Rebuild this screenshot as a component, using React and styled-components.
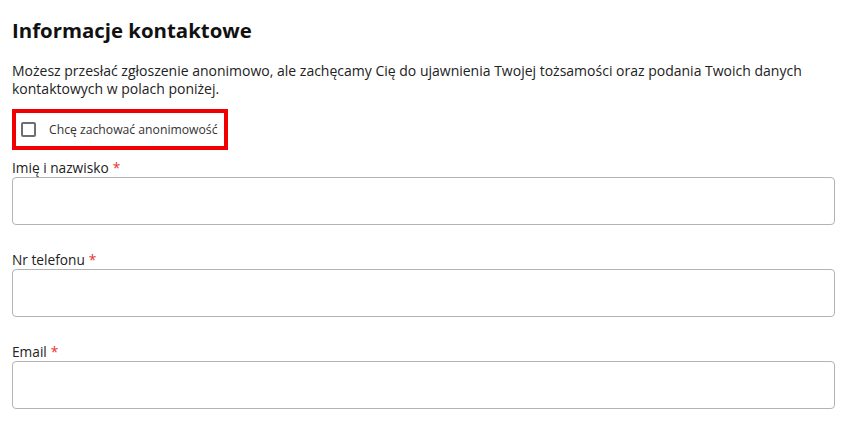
import React from "react";
import styled, { createGlobalStyle } from "styled-components";

const GlobalStyle = createGlobalStyle`
  body {
    margin: 0;
    background: #fff;
    font-family: "Open Sans", "Noto Sans", sans-serif;
    color: #1a1a1a;
  }
`;

const Section = styled.section`
  padding: 17px 15px 0 12px;
  display: flex;
  flex-direction: column;
`;

const Heading = styled.h2`
  margin: 0;
  font-size: 20.4px;
  font-weight: 700;
  line-height: 27px;
  color: #111;
`;

const Intro = styled.p`
  margin: 18px 0 0;
  font-size: 14px;
  line-height: 18px;
  color: #222;
`;

const AnonBox = styled.label`
  align-self: flex-start;
  display: flex;
  align-items: center;
  gap: 13px;
  margin-top: 11px;
  width: 216px;
  height: 41px;
  box-sizing: border-box;
  padding-left: 5px;
  border: 4px solid #f00000;
  font-size: 12.2px;
  white-space: nowrap;
  color: #333;
  cursor: pointer;
`;

const Check = styled.span`
  width: 15px;
  height: 15px;
  box-sizing: border-box;
  border: 2px solid #6e6e6e;
  border-radius: 2px;
  flex-shrink: 0;
`;

const Field = styled.div`
  display: flex;
  flex-direction: column;
  margin-top: ${(p) => p.$gap}px;
`;

const Label = styled.label`
  font-size: 13.7px;
  line-height: 19px;
  color: #222;
`;

const Req = styled.span`
  color: #e8312f;
  margin-left: 4px;
`;

const Input = styled.input`
  height: 47.5px;
  box-sizing: border-box;
  border: 1px solid #b3b3b3;
  border-radius: 4px;
  padding: 0 12px;
  font: inherit;
  font-size: 14px;
  outline: none;
`;

const fields = [
  { label: "Imię i nazwisko", type: "text", gap: 8 },
  { label: "Nr telefonu", type: "tel", gap: 25.5 },
  { label: "Email", type: "email", gap: 25.5 },
];

export default function App() {
  return (
    <>
      <GlobalStyle />
      <Section>
        <Heading>Informacje kontaktowe</Heading>
        <Intro>
          Możesz przesłać zgłoszenie anonimowo, ale zachęcamy Cię do ujawnienia
          Twojej tożsamości oraz podania Twoich danych kontaktowych w polach
          poniżej.
        </Intro>
        <AnonBox>
          <Check />
          Chcę zachować anonimowość
        </AnonBox>
        {fields.map((f) => (
          <Field key={f.label} $gap={f.gap}>
            <Label>
              {f.label}
              <Req>*</Req>
            </Label>
            <Input type={f.type} />
          </Field>
        ))}
      </Section>
    </>
  );
}
